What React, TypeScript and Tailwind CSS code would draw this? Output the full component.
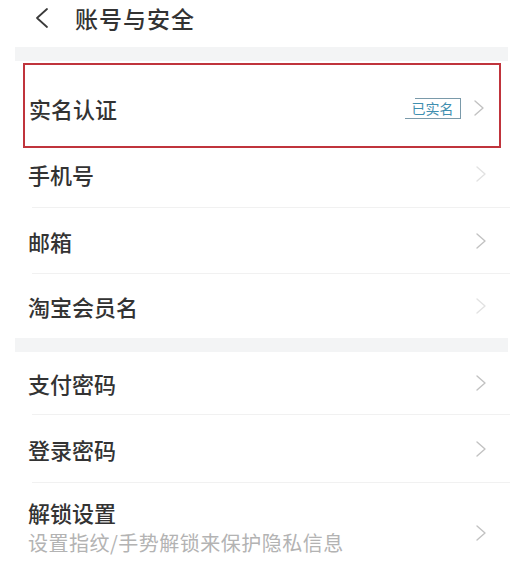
import React from "react";

const font = { fontFamily: '"Noto Sans CJK SC", "Noto Sans", sans-serif' };

function Chevron({ faint = false }: { faint?: boolean }) {
  return (
    <svg width="12" height="18" viewBox="0 0 12 18" className="shrink-0">
      <polyline
        points="2,2 10,9 2,16"
        fill="none"
        stroke={faint ? "#e2e2e2" : "#c2c2c2"}
        strokeWidth="1.4"
        strokeLinecap="round"
        strokeLinejoin="round"
      />
    </svg>
  );
}

function Row({
  label,
  h,
  shift = "",
  faint = false,
  sep = true,
}: {
  label: string;
  h: string;
  shift?: string;
  faint?: boolean;
  sep?: boolean;
}) {
  return (
    <div className="flex flex-col">
      <div className={`flex items-center justify-between pl-[28px] pr-[23px] ${h} ${shift}`}>
        <span className="text-[22px] font-medium text-[#333333] leading-none">{label}</span>
        <Chevron faint={faint} />
      </div>
      {sep && <div className="ml-[32px] h-px bg-[#f1f1f1]" />}
    </div>
  );
}

export default function App() {
  return (
    <div className="w-[510px] h-[565px] bg-white overflow-hidden" style={font}>
      {/* header */}
      <div className="h-[47px] flex items-start pt-[4px]">
        <svg width="20" height="22" viewBox="0 0 20 22" className="ml-[32px] mt-[3px]">
          <polyline
            points="15,2 5,11 15,20"
            fill="none"
            stroke="#3a3a3a"
            strokeWidth="1.8"
            strokeLinecap="round"
            strokeLinejoin="round"
          />
        </svg>
        <span className="ml-[23px] text-[23px] font-medium tracking-[1px] text-[#333333] leading-[28px]">账号与安全</span>
      </div>

      <div className="ml-[15px] mr-[2px] h-[14px] bg-[#f3f4f5]" />

      {/* real-name row with highlight */}
      <div className="h-[89px] pt-[2px] pl-[23px] pr-[9px]">
        <div className="h-[85px] border-[2.5px] border-[#c0343c] flex items-center justify-between pl-[4px] pr-[14px] pt-[5px]">
          <span className="text-[22px] font-medium text-[#333333] leading-none">实名认证</span>
          <div className="flex items-center gap-[12px]">
            <span className="relative flex items-center justify-center h-[21px] w-[56px] border-r-[1.5px] border-b-[1.5px] border-[#7a9aaa]">
              <span className="absolute top-0 left-[10px] right-0 h-[1.5px] bg-[#7a9aaa]" />
              <span className="text-[14px] leading-none text-[#3f8fb0] whitespace-nowrap">已实名</span>
            </span>
            <Chevron />
          </div>
        </div>
      </div>

      <Row label="手机号" h="h-[57px]" shift="pb-[10px]" faint />
      <Row label="邮箱" h="h-[65px]" />
      <Row label="淘宝会员名" h="h-[64px]" faint sep={false} />

      <div className="ml-[15px] mr-[2px] h-[14px] bg-[#f3f4f5]" />

      <Row label="支付密码" h="h-[62px]" />
      <Row label="登录密码" h="h-[67px]" />

      <div className="flex items-center justify-between pl-[28px] pr-[23px] pt-[18px]">
        <div className="flex flex-col">
          <span className="text-[22px] font-medium text-[#333333] leading-none">解锁设置</span>
          <span className="mt-[10px] text-[20px] tracking-[0.5px] text-[#b3b3b3] leading-none">设置指纹/手势解锁来保护隐私信息</span>
        </div>
        <div className="mt-[12px]">
          <Chevron />
        </div>
      </div>
    </div>
  );
}
